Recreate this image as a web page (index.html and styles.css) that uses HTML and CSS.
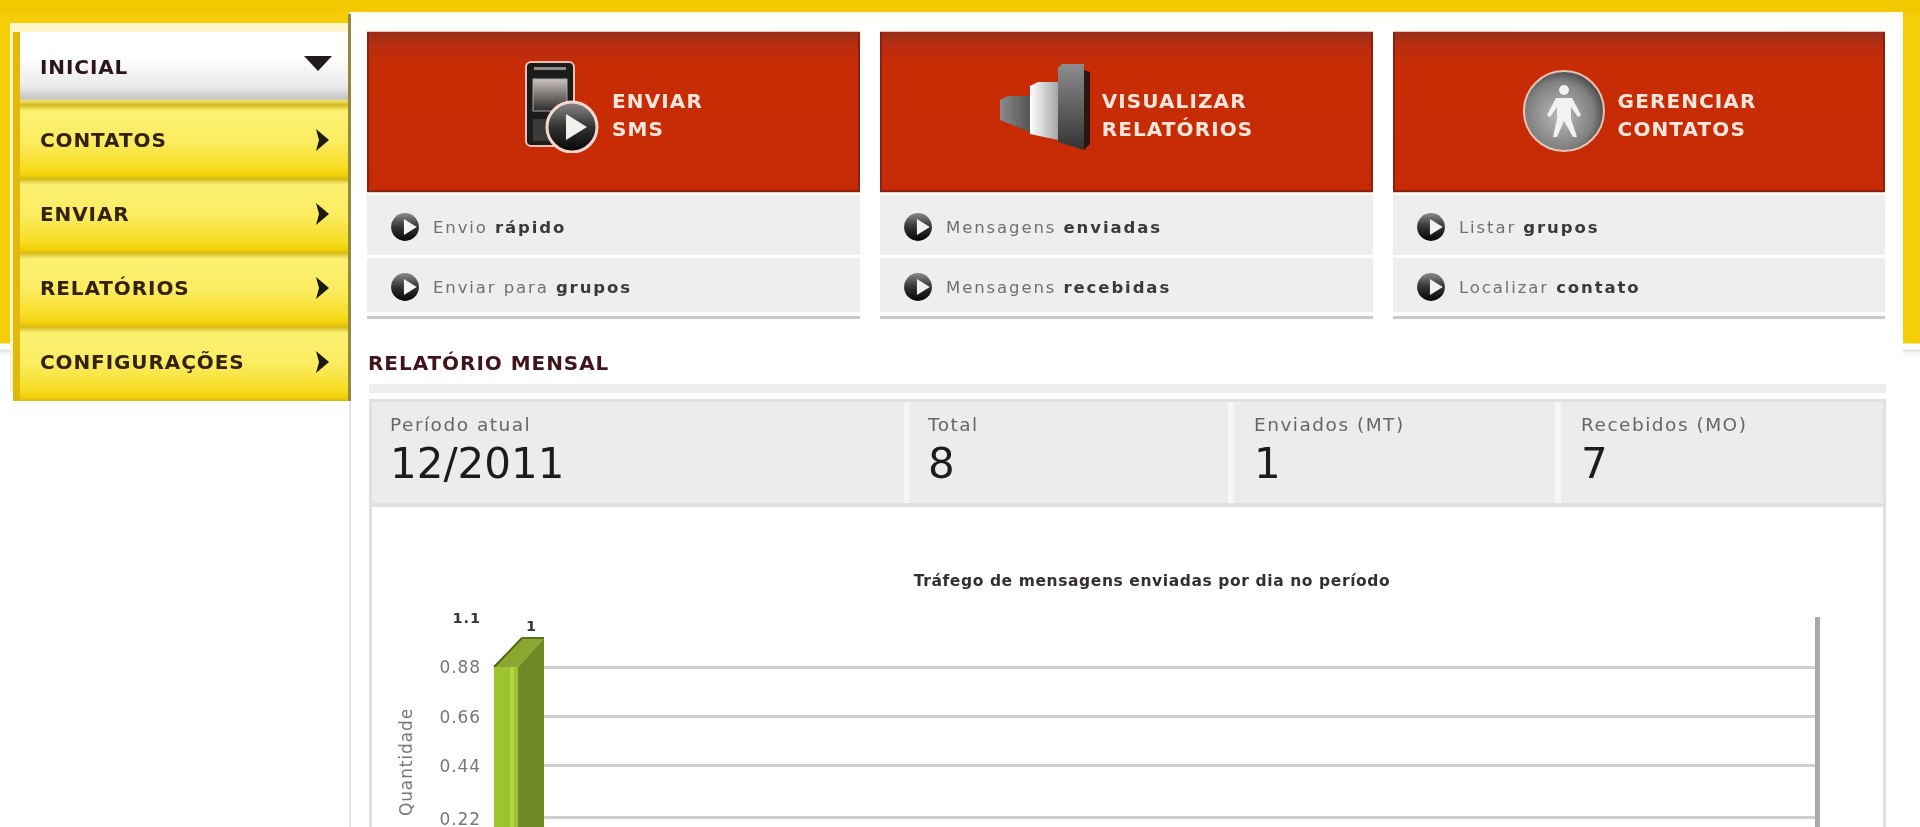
FILE: index.html
```html
<!DOCTYPE html>
<html lang="pt-BR">
<head>
<meta charset="utf-8">
<title>Inicial</title>
<link rel="stylesheet" href="styles.css">
</head>
<body>
<svg class="defs" width="0" height="0" aria-hidden="true">
  <defs>
    <linearGradient id="ballG" x1="0" y1="0" x2="0" y2="1"><stop offset="0" stop-color="#8a8a8a"/><stop offset=".5" stop-color="#333"/><stop offset="1" stop-color="#050505"/></linearGradient>
    <linearGradient id="screenG" x1="0" y1="0" x2="0" y2="1"><stop offset="0" stop-color="#c9c2bd"/><stop offset="1" stop-color="#2a2a2a"/></linearGradient>
    <linearGradient id="barA" x1="0" y1="0" x2="1" y2="0"><stop offset="0" stop-color="#8a8a8a"/><stop offset="1" stop-color="#555"/></linearGradient>
    <linearGradient id="barB" x1="0" y1="0" x2="1" y2="0"><stop offset="0" stop-color="#fff"/><stop offset="1" stop-color="#a5a5a5"/></linearGradient>
    <linearGradient id="barC" x1="0" y1="0" x2="0" y2="1"><stop offset="0" stop-color="#8d8d8d"/><stop offset="1" stop-color="#333"/></linearGradient>
    <radialGradient id="sphere" cx=".45" cy=".55" r=".6"><stop offset="0" stop-color="#bbb"/><stop offset=".7" stop-color="#808080"/><stop offset="1" stop-color="#3c3c3c"/></radialGradient>
    <symbol id="bullet" viewBox="0 0 28 28">
      <circle cx="14" cy="14" r="13" fill="url(#ballG)"/>
      <path d="M13 6.500 25 14 13 21.500Z" fill="#f2f2f2"/>
    </symbol>
  </defs>
</svg>
<div class="page">
  <nav class="side">
    <a class="nav-item active"><span>INICIAL</span><svg class="caret-down" viewBox="0 0 28 16"><path d="M0 1H28L14 16Z" fill="#231a1c"/></svg></a>
    <a class="nav-item"><span>CONTATOS</span><svg class="caret" viewBox="0 0 14 22"><path d="M1 0 14 11 1 22 4 11Z" fill="#1d1a10"/></svg></a>
    <a class="nav-item"><span>ENVIAR</span><svg class="caret" viewBox="0 0 14 22"><path d="M1 0 14 11 1 22 4 11Z" fill="#1d1a10"/></svg></a>
    <a class="nav-item"><span>RELATÓRIOS</span><svg class="caret" viewBox="0 0 14 22"><path d="M1 0 14 11 1 22 4 11Z" fill="#1d1a10"/></svg></a>
    <a class="nav-item"><span>CONFIGURAÇÕES</span><svg class="caret" viewBox="0 0 14 22"><path d="M1 0 14 11 1 22 4 11Z" fill="#1d1a10"/></svg></a>
  </nav>
  <main class="panel">
    <section class="cards">
      <article class="card">
        <header class="card-head">
          <svg class="icon-phone" viewBox="0 0 76 92">
            <rect x="2" y="1" width="48" height="84" rx="5" fill="#1c1c1c" stroke="#f0c0b0" stroke-width="2"/>
            <rect x="10" y="6" width="32" height="3" fill="#8f8f8f"/>
            <rect x="9" y="18" width="34" height="32" fill="url(#screenG)" stroke="#aaa"/>
            <rect x="9" y="58" width="34" height="22" fill="#3b3b3b"/>
            <circle cx="48" cy="66" r="25" fill="url(#ballG)" stroke="#f8d8cc" stroke-width="3"/>
            <path d="M42 53 63 66 42 79Z" fill="#f1f1ee"/>
          </svg>
          <h2>ENVIAR<br>SMS</h2>
        </header>
        <a class="row"><svg class="bullet"><use href="#bullet"/></svg><span>Envio <b>rápido</b></span></a>
        <a class="row"><svg class="bullet"><use href="#bullet"/></svg><span>Enviar para <b>grupos</b></span></a>
      </article>
      <article class="card">
        <header class="card-head">
          <svg class="icon-bars" viewBox="0 0 90 86">
            <path d="M0 36 8 32H30V68L0 56Z" fill="url(#barA)"/>
            <path d="M30 22 38 18H58V76L30 70Z" fill="url(#barB)"/>
            <path d="M58 4 62 0H84V86L58 78Z" fill="url(#barC)"/>
            <path d="M84 6 90 8V80L84 86Z" fill="#2a1510"/>
          </svg>
          <h2>VISUALIZAR<br>RELATÓRIOS</h2>
        </header>
        <a class="row"><svg class="bullet"><use href="#bullet"/></svg><span>Mensagens <b>enviadas</b></span></a>
        <a class="row"><svg class="bullet"><use href="#bullet"/></svg><span>Mensagens <b>recebidas</b></span></a>
      </article>
      <article class="card">
        <header class="card-head">
          <svg class="icon-person" viewBox="0 0 84 84">
            <circle cx="42" cy="42" r="40" fill="url(#sphere)" stroke="#e8c4b8" stroke-width="2"/>
            <circle cx="42" cy="21" r="5" fill="#f2f2f2"/>
            <path d="M34 29H50L59 46 56 48 49 38V50L55 68H51L42 52 35 68H31L35 50V38L28 48 25 46Z" fill="#f2f2f2"/>
          </svg>
          <h2>GERENCIAR<br>CONTATOS</h2>
        </header>
        <a class="row"><svg class="bullet"><use href="#bullet"/></svg><span>Listar <b>grupos</b></span></a>
        <a class="row"><svg class="bullet"><use href="#bullet"/></svg><span>Localizar <b>contato</b></span></a>
      </article>
    </section>

    <h1 class="section-title">RELATÓRIO MENSAL</h1>
    <div class="band"></div>

    <section class="report">
      <div class="stats">
        <div class="stat stat-first"><small>Período atual</small><strong>12/2011</strong></div>
        <div class="stat stat-total"><small>Total</small><strong>8</strong></div>
        <div class="stat stat-sent"><small>Enviados (MT)</small><strong>1</strong></div>
        <div class="stat stat-received"><small>Recebidos (MO)</small><strong>7</strong></div>
      </div>
      <div class="chart">
        <svg class="plot" width="1514" height="320" viewBox="0 0 1514 320">
          <text class="plot-title" x="780" y="76" text-anchor="middle">Tráfego de mensagens enviadas por dia no período</text>
          <g class="grid">
            <rect x="172" y="156" width="1272" height="3"/>
            <rect x="172" y="205" width="1272" height="3"/>
            <rect x="172" y="254" width="1272" height="3"/>
            <rect x="172" y="306" width="1272" height="3"/>
          </g>
          <rect x="1443" y="107" width="5" height="213" fill="#a9a9a9"/>
          <g class="ticks" text-anchor="end">
            <text x="109" y="113" class="tick-strong">1.1</text>
            <text x="109" y="163">0.88</text>
            <text x="109" y="213">0.66</text>
            <text x="109" y="262">0.44</text>
            <text x="109" y="315">0.22</text>
          </g>
          <text class="axis" transform="translate(40 252) rotate(-90)" text-anchor="middle">Quantidade</text>
          <text class="tick-strong" x="159" y="121" text-anchor="middle">1</text>
          <path d="M122 157 150 128H172L146 157Z" fill="#8aa82f"/>
          <path d="M122 157 150 128" stroke="#4f6516" stroke-width="2" fill="none"/>
          <path d="M150 128H172" stroke="#5a7219" stroke-width="2"/>
          <rect x="122" y="157" width="24" height="163" fill="#9dc42e"/>
          <rect x="138" y="157" width="4" height="163" fill="#b2d648"/>
          <path d="M146 157 172 128V320H146Z" fill="#6f8a25"/>
        </svg>
      </div>
    </section>
  </main>
</div>
</body>
</html>
```
FILE: styles.css
```css
* { box-sizing: border-box; }
html, body { margin: 0; height: 100%; background: #fff; }
.defs { position: absolute; }
.page {
  height: 827px;
  overflow: hidden;
  display: flex;
  align-items: flex-start;
  padding-left: 13px;
  font-family: "DejaVu Sans", Verdana, sans-serif;
  background: linear-gradient(#f2c900 0, #f2c900 12px, #f5cd08 13px, #f5cd08 343px, #fff 344px, #fff 349px, #e4e4e4 350px, #f6f6f6 353px, #fff 358px);
  filter: blur(.5px);
}
.side {
  position: relative;
  width: 338px;
  margin-top: 32px;
  display: flex;
  flex-direction: column;
  border-left: 7px solid #e3b90c;
  border-right: 3px solid #8f8a3d;
  box-shadow: 0 -9px 0 #fdf6c9, -3px -9px 0 #fdf6c9;
  background: #d6bc10;
}
.side::after {
  content: "";
  position: absolute;
  top: -18px;
  right: -3px;
  width: 3px;
  height: 18px;
  background: #8f8a3d;
}
.nav-item {
  height: 74px;
  display: flex;
  align-items: center;
  justify-content: space-between;
  padding: 0 19px 4px 20px;
  color: #33220f;
  font-size: 20px;
  font-weight: 700;
  letter-spacing: .9px;
  background: linear-gradient(#d3ba20 0, #fdf173 6px, #fbec60 50%, #f6dc20 86%, #f2d008 95%, #d6ba10 100%);
}
.active {
  height: 73px;
  color: #2b1420;
  padding-right: 16px;
  background: linear-gradient(#ffffff 0, #ffffff 35%, #e9e9e9 75%, #c4c4c4 92%, #f3e26a 94%, #d3ba20 100%);
}
.caret { width: 14px; height: 22px; }
.caret-down { width: 28px; height: 16px; margin-top: -8px; }
.panel {
  width: 1552px;
  min-height: 815px;
  margin: 12px 0 0 0;
  padding: 20px 17px 0 16px;
  background: linear-gradient(#fffdf0, #fff 16px);
  box-shadow: -2px 0 0 #e6e6e6;
}
.cards { display: flex; gap: 20px; }
.card {
  width: 493px;
  height: 287px;
  background: #fff;
  border-bottom: 3px solid #c9c9c9;
}
.card:last-child { width: 492px; }
.card-head {
  height: 160px;
  display: flex;
  align-items: center;
  justify-content: center;
  gap: 12px;
  border: 2px solid #8c2010;
  border-top: 0;
  box-shadow: 0 1px 0 #f8c0b0, 0 -1px 0 #f8c0b0;
  background: linear-gradient(#9a2e1a 0, #b92d10 14px, #c82c05 34px, #c72b05 100%);
}
.card-head h2 {
  margin: 8px 0 0;
  color: #fbe6dc;
  font-size: 20px;
  line-height: 28px;
  font-weight: 700;
  letter-spacing: 1.1px;
}
.icon-phone { width: 76px; height: 92px; margin-bottom: 8px; }
.icon-bars { width: 90px; height: 86px; margin-bottom: 8px; }
.icon-person { width: 84px; height: 84px; }
.row {
  height: 60px;
  margin-top: 3px;
  display: flex;
  align-items: center;
  gap: 13px;
  padding: 4px 0 0 23px;
  background: #eeeeee;
  color: #707070;
  font-size: 16.500px;
  letter-spacing: 1.9px;
}
.row + .row { height: 54px; }
.row b { color: #3a3a3a; font-weight: 700; }
.bullet { width: 30px; height: 30px; flex: none; }
.section-title {
  margin: 33px 0 0 1px;
  color: #40141c;
  font-size: 20px;
  line-height: 22px;
  font-weight: 700;
  letter-spacing: .95px;
}
.band { height: 9px; margin: 10px 0 0 2px; background: #eeeeee; }
.report {
  height: 440px;
  margin-top: 6px;
  margin-left: 2px;
  border: solid #e0e0e0;
  border-width: 3px 3px 0;
}
.stats {
  display: flex;
  gap: 6px;
  height: 105px;
  background: #f6f6f6;
  border-bottom: 4px solid #e0e0e0;
}
.stat {
  padding: 13px 0 0 18px;
  background: #ececec;
  display: flex;
  flex-direction: column;
}
.stat-first { width: 532px; }
.stat-total { width: 318px; }
.stat-sent { width: 321px; padding-left: 20px; }
.stat-received { flex: 1; padding-left: 20px; }
.stat small { color: #666; font-size: 18.500px; letter-spacing: 1.5px; line-height: 20px; }
.stat strong { color: #1c1c1c; font-size: 42px; line-height: 58px; font-weight: 400; }
.plot { display: block; margin-top: 3px; }
.plot-title { font-size: 15.500px; font-weight: 700; fill: #33302e; letter-spacing: .6px; }
.grid rect { fill: #cfcfcf; }
.ticks text { font-size: 17px; fill: #777; letter-spacing: .9px; }
.ticks .tick-strong, .tick-strong { font-size: 14.500px; font-weight: 700; fill: #333; }
.axis { font-size: 17px; fill: #777; letter-spacing: .9px; }
```
